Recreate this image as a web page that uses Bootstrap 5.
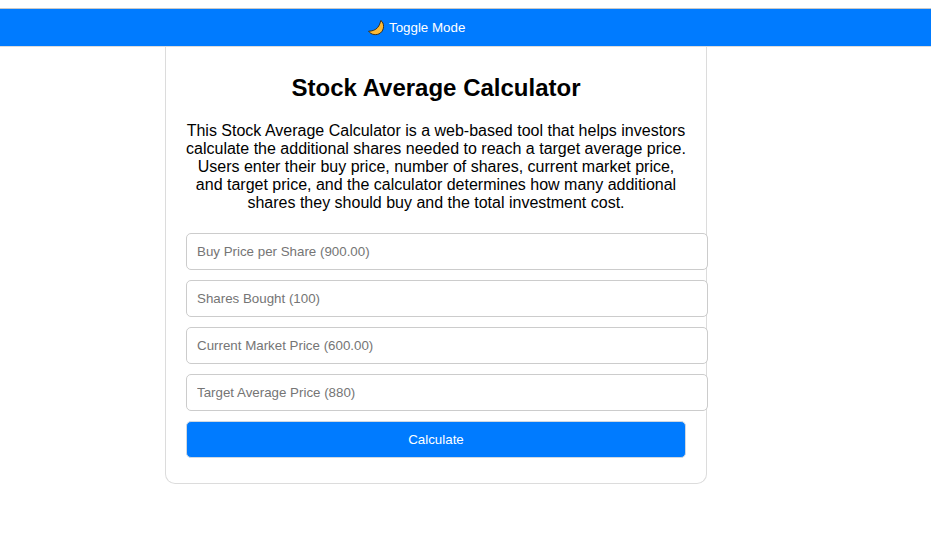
<!DOCTYPE html>
<html lang="en">
<head>
<meta charset="utf-8">
<title>Stock Average Calculator</title>
<link href="https://cdn.jsdelivr.net/npm/bootstrap@5.3.0/dist/css/bootstrap.min.css" rel="stylesheet">
<style>
html, body { background: #fff; }
body { font-family: "Liberation Sans", Arial, sans-serif; color: #000; padding-top: 8px; overflow: hidden; }
.topbar { background: #007bff; height: 39px; border-top: 1px solid #c8c8c8; border-bottom: 1px solid #dcdcdc; padding: 0 0 0 368px; }
.toggle-btn { background: transparent; border: 0; padding: 1px 0 0; color: #fff; font-size: 13.333px; line-height: 16px; gap: 5px; }
.moon-ico { width: 16px; height: 16px; display: block; }
.calc-panel { width: 542px; margin-left: 165px; height: 437px; border: 1px solid #dcdcdc; border-top: 0; border-radius: 0 0 10px 10px; padding: 27px 20px 0; text-align: center; }
.calc-title { font-size: 24px; font-weight: 700; line-height: 28px; margin: 0 0 20px; }
.calc-desc { font-size: 16px; line-height: 18px; margin: 0 0 21px; }
.calc-input.form-control { width: 522px; max-width: none; height: 37px; margin-bottom: 10px; padding: 0 10px; border: 1px solid #ccc; border-radius: 5px; font-size: 13.333px; }
.calc-input.form-control::placeholder { color: #757575; opacity: 1; }
.calc-btn.btn { width: 500px; height: 37px; padding: 0; display: block; background: #007bff; border: 1px solid #d0d8e0; border-radius: 5px; color: #fff; font-size: 13.333px; }
</style>
</head>
<body>
<div class="topbar d-flex align-items-center">
  <button class="toggle-btn d-flex align-items-center" type="button">
    <svg class="moon-ico" viewBox="0 0 16 16" aria-hidden="true"><path d="M12.800.5C16.600 3 16.500 9.800 12.400 13 8.800 15.700 3 15 .6 11.200 4 11.200 7.600 10 9.600 7.600 11.400 5.400 12.200 3 12.800.5z" fill="#fbb934" stroke="#2f2412" stroke-width=".9" stroke-linejoin="round"/></svg>
    <span>Toggle Mode</span>
  </button>
</div>
<main class="calc-panel">
  <h1 class="calc-title">Stock Average Calculator</h1>
  <p class="calc-desc">This Stock Average Calculator is a web-based tool that helps investors calculate the additional shares needed to reach a target average price. Users enter their buy price, number of shares, current market price, and target price, and the calculator determines how many additional shares they should buy and the total investment cost.</p>
  <form>
    <input class="form-control calc-input" type="text" placeholder="Buy Price per Share (900.00)">
    <input class="form-control calc-input" type="text" placeholder="Shares Bought (100)">
    <input class="form-control calc-input" type="text" placeholder="Current Market Price (600.00)">
    <input class="form-control calc-input" type="text" placeholder="Target Average Price (880)">
    <button class="btn calc-btn" type="button">Calculate</button>
  </form>
</main>
<script src="https://cdn.jsdelivr.net/npm/bootstrap@5.3.0/dist/js/bootstrap.bundle.min.js"></script>
</body>
</html>
